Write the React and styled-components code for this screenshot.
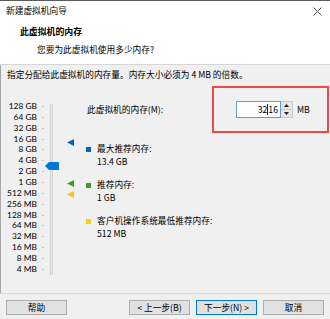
import React from 'react';
import styled, { createGlobalStyle } from 'styled-components';

const Global = createGlobalStyle`
  html, body { margin: 0; padding: 0; background: #f0f0f0; }
  body {
    font-family: "Noto Sans CJK SC", "Noto Sans", sans-serif;
    font-size: 8.7px;
    color: #000;
  }
  * { box-sizing: border-box; }
`;

const Window = styled.div`
  position: relative;
  width: 330px;
  height: 319px;
  display: flex;
  flex-direction: column;
  background: #f0f0f0;
  border-top: 1px solid #5c5c5c;
  overflow: hidden;
`;

const Header = styled.header`
  background: #fff;
  height: 64px;
  border-bottom: 1px solid #d6d6d6;
`;

const TitleRow = styled.div`
  height: 20px;
  display: flex;
  align-items: center;
  justify-content: space-between;
  padding: 0 8px 0 6px;
  line-height: 20px;
`;

const Heading = styled.div`
  margin-top: 3px;
  padding-left: 20px;
  line-height: 16px;
  font-weight: 700;
  font-size: 8.9px;
`;

const Subtitle = styled.div`
  margin-top: 2px;
  padding-left: 37px;
  line-height: 16px;
`;

const Body = styled.div`
  flex: 1;
  display: flex;
  flex-direction: column;
  border-left: 1px solid #a8a8a8;
`;

const Description = styled.div`
  padding: 2px 0 0 6px;
  line-height: 16px;
`;

const Main = styled.div`
  flex: 1;
  display: flex;
`;

const SliderArea = styled.div`
  position: relative;
  width: 86px;
  padding-top: 18px;
`;

const ScaleRow = styled.div`
  height: 10.87px;
  display: flex;
  align-items: center;
  line-height: 10.87px;
`;

const ScaleLabel = styled.span`
  width: 36px;
  text-align: right;
  white-space: nowrap;
  font-family: Lato, "Liberation Sans", sans-serif;
  font-size: 8.4px;
`;

const Tick = styled.span`
  width: 2px;
  height: 1px;
  margin-left: 5px;
  background: #c4c4c4;
`;

const Track = styled.div`
  position: absolute;
  left: 49px;
  top: 21px;
  width: 3px;
  height: 171px;
  background: #e9e9e9;
  border-left: 1px solid #d4d4d4;
  border-right: 1px solid #d4d4d4;
`;

const Marker = styled.svg`
  position: absolute;
  left: ${(p) => p.$left}px;
  top: ${(p) => p.$top}px;
`;

const Content = styled.div`
  flex: 1;
  display: flex;
  flex-direction: column;
`;

const MemRow = styled.div`
  margin-top: 18px;
  height: 17px;
  display: flex;
  align-items: center;
`;

const MemLabel = styled.span`
  width: 149px;
  line-height: 17px;
`;

const InputBox = styled.div`
  width: 45px;
  height: 17px;
  background: #fff;
  border: 1px solid #5a9fe0;
  display: flex;
  align-items: center;
  justify-content: flex-end;
  padding-right: 2px;
  line-height: 15px;
`;

const Caret = styled.span`
  display: inline-block;
  width: 1px;
  height: 11px;
  background: #222;
`;

const Spinner = styled.div`
  width: 12px;
  height: 17px;
  display: flex;
  flex-direction: column;
  border: 1px solid #c9c9c9;
  border-left: none;
  background: #e6e6e6;
`;

const SpinBtn = styled.div`
  flex: 1;
  display: flex;
  align-items: center;
  justify-content: center;
  border-top: ${(p) => (p.$bottom ? '1px solid #c9c9c9' : 'none')};
`;

const Unit = styled.span`
  margin-left: 4px;
  line-height: 17px;
`;

const Legend = styled.div`
  margin-top: 25px;
  display: flex;
  flex-direction: column;
  gap: 11px;
`;

const LegendItem = styled.div`
  display: flex;
  align-items: flex-start;
`;

const Swatch = styled.span`
  width: 5px;
  height: 5px;
  margin-top: 4px;
  margin-left: -1px;
  background: ${(p) => p.$color};
  flex: none;
`;

const LegendText = styled.div`
  margin-left: 6px;
  line-height: 12.5px;
`;

const Highlight = styled.div`
  position: absolute;
  left: 212px;
  top: 85px;
  width: 117px;
  height: 47px;
  border: 2px solid #f04848;
  pointer-events: none;
`;

const Footer = styled.footer`
  height: 26px;
  border-top: 1px solid #dadada;
  display: flex;
  justify-content: space-between;
  padding: 6px 6px 0 6px;
`;

const ButtonGroup = styled.div`
  display: flex;
  gap: 6px;
`;

const Button = styled.button`
  width: 61px;
  height: 15px;
  padding: 0;
  font-family: inherit;
  font-size: 8.7px;
  line-height: 13px;
  color: #000;
  background: #e1e1e1;
  border: 1px solid ${(p) => (p.$primary ? '#0078d7' : '#adadad')};
`;

const scale = [
  '128 GB', '64 GB', '32 GB', '16 GB', '8 GB', '4 GB', '2 GB', '1 GB',
  '512 MB', '256 MB', '128 MB', '64 MB', '32 MB', '16 MB', '8 MB', '4 MB',
];

const Arrow = ({ up }) => (
  <svg width="5" height="3" viewBox="0 0 5 3">
    <polygon points={up ? '2.5,0 5,3 0,3' : '0,0 5,0 2.5,3'} fill="#222" />
  </svg>
);

const LeftTri = ({ color, left, top }) => (
  <Marker $left={left} $top={top} width="7" height="7" viewBox="0 0 7 7">
    <polygon points="0,3.5 7,0 7,7" fill={color} />
  </Marker>
);

export default function App() {
  return (
    <>
      <Global />
      <Window>
        <Header>
          <TitleRow>
            <span>新建虚拟机向导</span>
            <svg width="9" height="9" viewBox="0 0 9 9">
              <path d="M0.5 0.5 L8.5 8.5 M8.5 0.5 L0.5 8.5" stroke="#4a4a4a" strokeWidth="1" />
            </svg>
          </TitleRow>
          <Heading>此虚拟机的内存</Heading>
          <Subtitle>您要为此虚拟机使用多少内存?</Subtitle>
        </Header>
        <Body>
          <Description>指定分配给此虚拟机的内存量。内存大小必须为 4 MB 的倍数。</Description>
          <Main>
            <SliderArea>
              {scale.map((s) => (
                <ScaleRow key={s}>
                  <ScaleLabel>{s}</ScaleLabel>
                  <Tick />
                </ScaleRow>
              ))}
              <Track />
              <Marker $left={44} $top={79} width="14" height="8" viewBox="0 0 14 8">
                <polygon points="0,4 4,0 14,0 14,8 4,8" fill="#0078d7" />
              </Marker>
              <LeftTri color="#0f62b4" left={66} top={56} />
              <LeftTri color="#3f9a2a" left={66} top={97} />
              <LeftTri color="#f0c419" left={66} top={108} />
            </SliderArea>
            <Content>
              <MemRow>
                <MemLabel>此虚拟机的内存(M):</MemLabel>
                <InputBox>
                  <span>32</span>
                  <Caret />
                  <span>16</span>
                </InputBox>
                <Spinner>
                  <SpinBtn><Arrow up /></SpinBtn>
                  <SpinBtn $bottom><Arrow /></SpinBtn>
                </Spinner>
                <Unit>MB</Unit>
              </MemRow>
              <Legend>
                <LegendItem>
                  <Swatch $color="#0f62b4" />
                  <LegendText>最大推荐内存:<br />13.4 GB</LegendText>
                </LegendItem>
                <LegendItem>
                  <Swatch $color="#3f9a2a" />
                  <LegendText>推荐内存:<br />1 GB</LegendText>
                </LegendItem>
                <LegendItem>
                  <Swatch $color="#f5cf12" />
                  <LegendText>客户机操作系统最低推荐内存:<br />512 MB</LegendText>
                </LegendItem>
              </Legend>
            </Content>
          </Main>
        </Body>
        <Footer>
          <Button>帮助</Button>
          <ButtonGroup>
            <Button>&lt; 上一步(B)</Button>
            <Button $primary>下一步(N) &gt;</Button>
            <Button>取消</Button>
          </ButtonGroup>
        </Footer>
        <Highlight />
      </Window>
    </>
  );
}
